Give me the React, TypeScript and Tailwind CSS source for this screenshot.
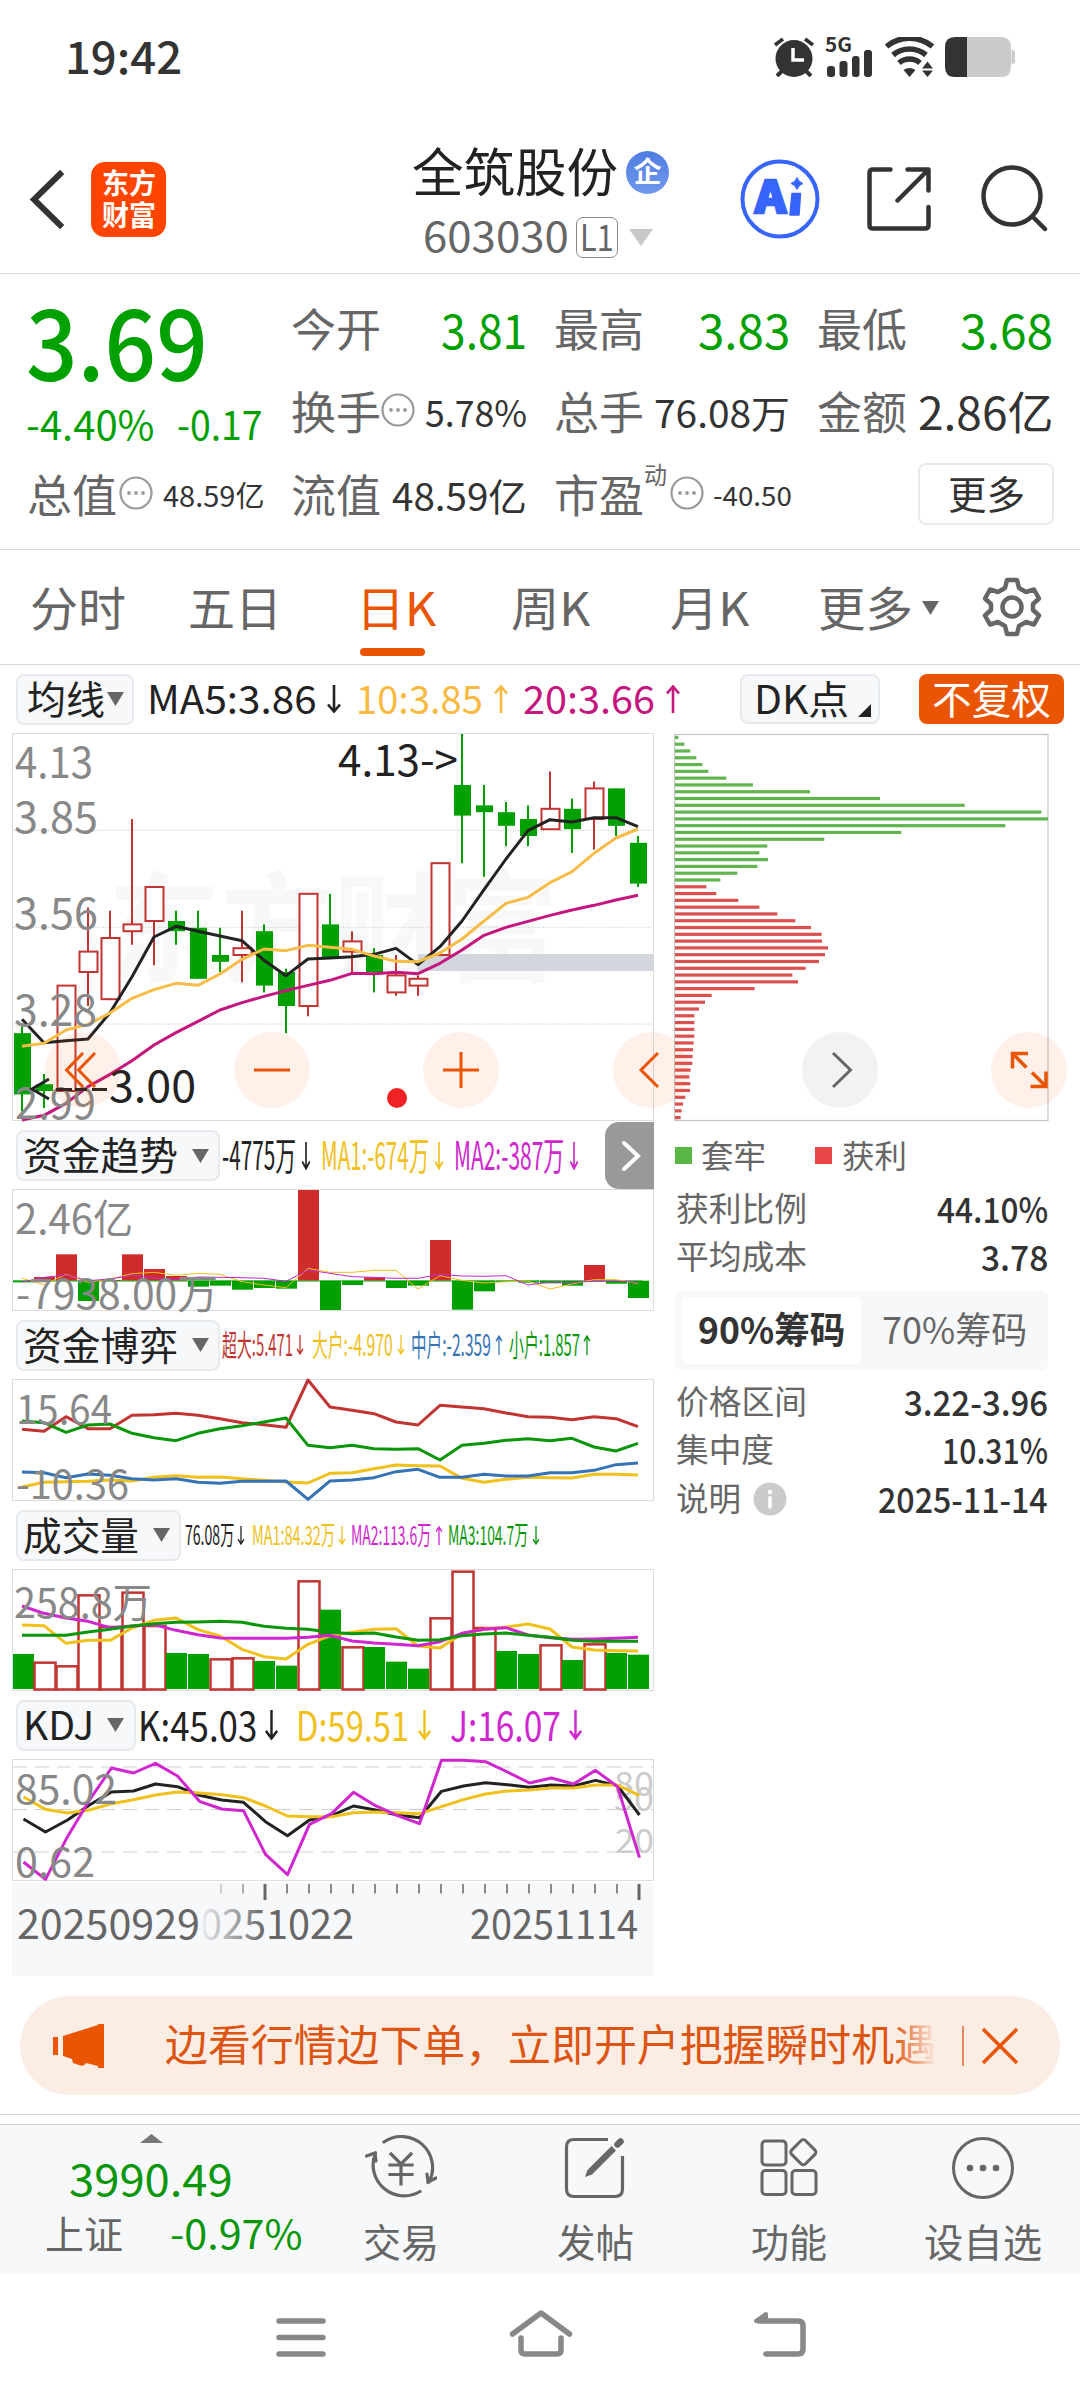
import { useLayoutEffect, useRef, useState } from 'react';
import type { ReactNode } from 'react';

const GREEN = '#00a000';
const RED = '#c23431';
const STEP = 22;
const X0 = 22;

// [open, close, high, low]
const CANDLES: [number, number, number, number][] = [
  [3.25, 3.07, 3.27, 3.02], [3.1, 3.08, 3.13, 3.03], [3.08, 3.39, 3.39, 3.08], [3.43, 3.49, 3.62, 3.33],
  [3.35, 3.53, 3.61, 3.35], [3.55, 3.57, 3.88, 3.51], [3.58, 3.68, 3.68, 3.45], [3.58, 3.55, 3.61, 3.51],
  [3.56, 3.41, 3.61, 3.41], [3.48, 3.46, 3.56, 3.43], [3.48, 3.5, 3.61, 3.4], [3.55, 3.39, 3.57, 3.37],
  [3.43, 3.33, 3.44, 3.25], [3.33, 3.66, 3.66, 3.3], [3.57, 3.47, 3.66, 3.47], [3.49, 3.52, 3.55, 3.43],
  [3.48, 3.43, 3.5, 3.37], [3.37, 3.42, 3.48, 3.36], [3.39, 3.41, 3.42, 3.36], [3.48, 3.75, 3.75, 3.48],
  [3.98, 3.89, 4.13, 3.75], [3.92, 3.9, 3.98, 3.71], [3.9, 3.86, 3.93, 3.8], [3.88, 3.83, 3.92, 3.8],
  [3.85, 3.91, 4.02, 3.85], [3.91, 3.85, 3.94, 3.78], [3.88, 3.97, 3.99, 3.79], [3.97, 3.86, 3.97, 3.83],
  [3.81, 3.69, 3.83, 3.68],
];

// line series, in thirds of a pixel from the base of each panel
const MA5 = [898, 968, 962, 957, 878, 770, 651, 619, 634, 648, 662, 721, 767, 717, 714, 710, 703, 685, 734, 680, 603, 509, 417, 332, 299, 306, 293, 293, 320];
const MA10 = [979, 970, 930, 913, 879, 835, 809, 790, 796, 762, 718, 687, 692, 676, 682, 688, 708, 724, 725, 699, 657, 603, 550, 532, 488, 455, 400, 354, 327];
const MA20 = [1200, 1186, 1150, 1100, 1063, 1022, 975, 938, 904, 870, 848, 829, 812, 796, 781, 760, 761, 757, 761, 730, 690, 646, 622, 604, 586, 570, 556, 540, 526];

const FLOW = [487, 471, 403, 543, 480, 403, 447, 468, 500, 497, 509, 504, 506, 210, 570, 495, 472, 504, 497, 360, 569, 514, 486, 488, 490, 497, 435, 491, 534];
const FLOW_MA1 = [475, 494, 463, 487, 477, 461, 457, 466, 460, 463, 485, 495, 503, 445, 457, 457, 451, 451, 507, 467, 481, 489, 485, 483, 507, 492, 479, 479, 490];
const FLOW_MA2 = [486, 472, 465, 482, 477, 466, 474, 478, 471, 472, 473, 475, 484, 450, 460, 470, 472, 475, 475, 463, 468, 469, 467, 495, 486, 487, 484, 483, 487];

const GAME_XL = [928, 934, 890, 926, 926, 886, 884, 880, 886, 896, 908, 914, 922, 780, 861, 871, 881, 906, 915, 856, 861, 866, 879, 890, 892, 899, 890, 896, 920];
const GAME_S = [903, 908, 937, 915, 912, 940, 953, 962, 940, 926, 917, 906, 894, 976, 983, 976, 986, 988, 986, 1020, 976, 970, 961, 956, 962, 955, 981, 993, 970];
const GAME_L = [1101, 1087, 1085, 1084, 1080, 1083, 1072, 1067, 1072, 1071, 1076, 1081, 1086, 1089, 1060, 1058, 1046, 1035, 1037, 1038, 1075, 1087, 1078, 1072, 1073, 1074, 1063, 1063, 1065];
const GAME_M = [1056, 1058, 1073, 1062, 1066, 1076, 1080, 1076, 1087, 1090, 1084, 1084, 1083, 1138, 1083, 1080, 1073, 1055, 1048, 1072, 1072, 1063, 1068, 1068, 1058, 1058, 1051, 1034, 1029];

const VOL = [462, 485, 496, 283, 378, 275, 375, 459, 462, 475, 472, 483, 497, 241, 329, 439, 441, 485, 506, 352, 212, 381, 453, 462, 433, 480, 430, 459, 464];
const VOL_UP = [1, 2, 3, 4, 5, 6, 9, 10, 13, 15, 19, 20, 21, 24, 26];
const VOL_MA1 = [375, 377, 430, 421, 421, 384, 361, 354, 389, 408, 448, 470, 477, 433, 407, 397, 388, 386, 438, 444, 401, 388, 381, 372, 387, 441, 450, 452, 453];
const VOL_MA2 = [318, 340, 354, 364, 383, 378, 374, 391, 404, 414, 415, 415, 415, 412, 406, 423, 429, 433, 437, 425, 400, 388, 383, 405, 413, 418, 417, 415, 412];
const VOL_MA3 = [406, 406, 406, 396, 388, 378, 371, 367, 366, 364, 367, 379, 385, 388, 397, 401, 399, 411, 421, 419, 407, 402, 399, 406, 412, 421, 424, 424, 424];

const KDJ_K = [957, 996, 960, 915, 876, 873, 852, 860, 886, 900, 907, 965, 1007, 960, 947, 918, 930, 945, 953, 874, 858, 848, 854, 862, 855, 858, 841, 857, 945];
const KDJ_D = [891, 928, 939, 930, 911, 899, 885, 876, 879, 884, 893, 918, 948, 950, 950, 938, 936, 938, 941, 920, 899, 882, 873, 870, 864, 864, 855, 855, 887];
const KDJ_J = [1086, 1138, 1010, 900, 804, 819, 790, 828, 904, 927, 932, 1063, 1124, 973, 941, 877, 917, 947, 971, 781, 781, 785, 816, 849, 834, 852, 811, 860, 1073];

const CHIPS_TRAPPED = [10, 28, 46, 64, 82, 100, 154, 234, 405, 615, 869, 1099, 1119, 991, 679, 448, 277, 253, 279, 247, 187, 136];
const CHIPS_PROFIT = [94, 124, 190, 253, 307, 361, 408, 440, 441, 459, 450, 432, 392, 352, 369, 239, 110, 90, 72, 58, 58, 58, 58, 56, 54, 53, 52, 47, 43, 46, 45, 31, 24, 20, 17];

const xAt = (i: number) => X0 + i * STEP;
const priceY = (p: number) => 734 + (4.13 - p) * 340;
const toPoints = (values: number[], base: number) => values.map((v, i) => `${xAt(i)},${base + v / 3}`).join(' ');

// Text squeezed or stretched to an exact width
function Fit({ w, className = '', children }: { w: number; className?: string; children: ReactNode }) {
  const ref = useRef<HTMLSpanElement>(null);
  const [scale, setScale] = useState(1);
  useLayoutEffect(() => {
    if (ref.current) setScale(w / ref.current.offsetWidth);
  }, [w]);
  return (
    <span className={`inline-block shrink-0 leading-none ${className}`} style={{ width: w }}>
      <span ref={ref} className="inline-block origin-left whitespace-nowrap" style={{ transform: `scaleX(${scale}) translateY(-6%)` }}>
        {children}
      </span>
    </span>
  );
}

function Label({ x, y, w, size = 44, fill = '#888', children }: { x: number; y: number; w: number; size?: number; fill?: string; children: string }) {
  return (
    <text x={x - 2} y={y} fontSize={size} fill={fill} textLength={w + 4} lengthAdjust="spacingAndGlyphs">{children}</text>
  );
}

function Line({ values, base, color, width = 3 }: { values: number[]; base: number; color: string; width?: number }) {
  return <polyline points={toPoints(values, base)} fill="none" stroke={color} strokeWidth={width} strokeLinejoin="round" />;
}

function Frame({ top, height }: { top: number; height: number }) {
  return <rect x={12.5} y={top + 0.5} width={641} height={height - 1} fill="none" stroke="#dcdcdc" />;
}

function Arrow({ up = false, w = 16, h = 28, className = '' }: { up?: boolean; w?: number; h?: number; className?: string }) {
  return (
    <svg className={`shrink-0 ${className}`} width={w} height={h} viewBox="0 0 16 28" preserveAspectRatio="none" fill="none" stroke="currentColor" strokeWidth="2.6">
      {up ? <path d="M8 28V2M2 8.500l6-7 6 7" /> : <path d="M8 0v26M2 19.500l6 7 6-7" />}
    </svg>
  );
}

function Tri({ className = '' }: { className?: string }) {
  return (
    <svg className={`shrink-0 ${className}`} width="17" height="14" viewBox="0 0 17 14"><path d="M0 0h17l-8.500 14z" fill="#666" /></svg>
  );
}

function Dots({ className = '' }: { className?: string }) {
  return (
    <svg className={`shrink-0 ${className}`} width="34" height="34" viewBox="0 0 34 34">
      <circle cx="17" cy="17" r="15.500" fill="none" stroke="#999" strokeWidth="2.200" />
      <circle cx="10" cy="17" r="1.900" fill="#999" /><circle cx="17" cy="17" r="1.900" fill="#999" /><circle cx="24" cy="17" r="1.900" fill="#999" />
    </svg>
  );
}

function StatusBar() {
  return (
    <div className="h-[110px] flex items-start justify-between pl-[65px] pr-[65px] pt-[37px]">
      <Fit w={117} className="-mt-[2px] text-[45px] font-medium text-[#333]">19:42</Fit>
      <div className="flex h-10 text-[#333]">
        <svg width="42" height="40" viewBox="0 0 42 40" fill="#333">
          <circle cx="21" cy="21.500" r="18.500" />
          <path d="M2 8l8-6M40 8l-8-6" stroke="#333" strokeWidth="3.500" />
          <path d="M4 39l6-6M38 39l-6-6" stroke="#333" strokeWidth="4" />
          <path d="M20 11v12h11" fill="none" stroke="#fff" strokeWidth="3.500" />
        </svg>
        <svg className="ml-[11px] overflow-visible" width="47" height="40" viewBox="0 0 47 40" fill="#333">
          <text x="-1" y="15" fontSize="20" fontWeight="700" textLength="27" lengthAdjust="spacingAndGlyphs">5G</text>
          <rect x="1" y="29" width="8" height="11" rx="3" /><rect x="13.500" y="24" width="8" height="16" rx="3" />
          <rect x="26" y="19" width="7.500" height="21" rx="3" /><rect x="38" y="13" width="8" height="27" rx="3" />
        </svg>
        <svg className="ml-3" width="49" height="40" viewBox="0 0 49 40" fill="none" stroke="#333" strokeWidth="5.500">
          <path d="M1.500 9.500a36 36 0 0 1 46 0" /><path d="M8 18a26 26 0 0 1 33 0" /><path d="M14 26a16 16 0 0 1 21 0" />
          <path d="M18.500 33q6-4 12 0l-6 7z" fill="#333" stroke="none" />
          <path d="M37 31.500l5.500-7 5.500 7zM37 33.500l5.500 6.500 5.500-6.500z" fill="#333" stroke="none" />
        </svg>
        <svg className="ml-[11px]" width="70" height="40" viewBox="0 0 70 40">
          <path d="M10 0h46q10 0 10 10v20q0 10-10 10H10z" fill="#cbcbcb" />
          <path d="M10 0h12v40H10Q0 40 0 30V10Q0 0 10 0z" fill="#333" />
          <path d="M66.500 13q3.500 0 3.500 3v8q0 3-3.500 3z" fill="#cbcbcb" />
        </svg>
      </div>
    </div>
  );
}

function Header() {
  return (
    <div className="h-[164px] flex border-b border-[#d9d9d9]">
      <div className="flex h-[75px] mt-[52px] ml-[29px]">
        <svg className="mt-[7px]" width="38" height="61" viewBox="0 0 38 61" fill="none" stroke="#333" strokeWidth="6" strokeLinecap="square">
          <path d="M31 5L5 30.500 31 56" />
        </svg>
        <div className="ml-[24px] size-[75px] rounded-[14px] bg-[#ff4400] text-white text-[28px] font-bold flex flex-col items-center justify-center gap-[4px]">
          <Fit w={54} className="h-[28px]">东方</Fit>
          <Fit w={54} className="h-[28px]">财富</Fit>
        </div>
      </div>
      <div className="ml-[246px] w-[262px] pt-[37px]">
        <div className="flex items-center">
          <Fit w={206} className="text-[52px] text-[#222]">全筑股份</Fit>
          <div className="ml-[8px] mb-[2px] size-[43px] rounded-full bg-linear-to-b from-[#4f7de0] to-[#6f98ee] flex items-center justify-center text-white">
            <Fit w={28} className="text-[28px] font-bold">企</Fit>
          </div>
        </div>
        <div className="flex items-center h-[42px] mt-[17px] ml-[11px] text-[#666]">
          <Fit w={146} className="text-[42px]">603030</Fit>
          <div className="ml-[7px] w-[42px] h-[41px] rounded-[7px] border-[1.5px] border-[#888] flex items-center justify-center">
            <Fit w={34} className="text-[37px]">L1</Fit>
          </div>
          <svg className="ml-[11px]" width="24" height="17" viewBox="0 0 24 17"><path d="M0 0h24L12 17z" fill="#c8c8c8" /></svg>
        </div>
      </div>
      <div className="flex items-start mt-[49px] ml-[66px]">
        <svg width="80" height="80" viewBox="0 0 80 80" fill="#3764fb">
          <circle cx="40" cy="40" r="37.500" fill="none" stroke="#3764fb" strokeWidth="4" />
          <text x="15" y="54" fontSize="44" fontWeight="900" textLength="31" lengthAdjust="spacingAndGlyphs" stroke="#3764fb" strokeWidth="2.500">A</text>
          <path d="M52 34.500h8.500l-1.500 21.500h-9z" stroke="#3764fb" strokeWidth="1.500" strokeLinejoin="round" />
          <path d="M57 18.500q1.500 4.500 6 6-4.500 1.500-6 6-1.500-4.500-6-6 4.500-1.500 6-6z" stroke="#3764fb" strokeWidth="1" />
        </svg>
        <svg className="ml-[47px] mt-[8px]" width="64" height="64" viewBox="0 0 64 64" fill="none" stroke="#333" strokeWidth="4.500" strokeLinecap="round" strokeLinejoin="round">
          <path d="M23.500 2.500H6Q2.500 2.500 2.500 6v52q0 3.500 3.500 3.500h52q3.500 0 3.500-3.500V40M40.500 2.500h21v21M61 3L30.500 33.500" />
        </svg>
        <svg className="ml-[50px] mt-[6px]" width="67" height="67" viewBox="0 0 67 67" fill="none" stroke="#333" strokeWidth="4.500" strokeLinecap="round">
          <circle cx="31" cy="31" r="28.500" /><path d="M52 52l12 12" />
        </svg>
      </div>
    </div>
  );
}

function Quote() {
  return (
    <div className="h-[276px] border-b border-[#d9d9d9] flex flex-col">
      <div className="flex mt-[15px] h-[166px]">
        <div className="ml-[26px] w-[265px] pt-[6px] text-[#00a000]">
          <Fit w={182} className="text-[98px] font-medium h-[98px]">3.69</Fit>
          <div className="flex mt-[12px]">
            <Fit w={128} className="text-[40px]">-4.40%</Fit>
            <Fit w={86} className="text-[40px] ml-[23px]">-0.17</Fit>
          </div>
        </div>
        <div className="flex gap-[28px]">
          {[
            { a: '今开', av: '3.81', aw: 86, b: '换手', bv: '5.78%', bw: 102, dots: true, size: 'text-[37px]' },
            { a: '最高', av: '3.83', aw: 92, b: '总手', bv: '76.08万', bw: 136, dots: false, size: 'text-[38px]' },
            { a: '最低', av: '3.68', aw: 93, b: '金额', bv: '2.86亿', bw: 135, dots: false, size: 'text-[45px]' },
          ].map((c) => (
            <div key={c.a} className="w-[236px] -mr-px">
              <div className="h-[83px] flex items-center justify-between">
                <Fit w={90} className="text-[45px] text-[#666]">{c.a}</Fit>
                <Fit w={c.aw} className="text-[48px] text-[#00a000]">{c.av}</Fit>
              </div>
              <div className="h-[83px] flex items-center justify-between">
                <div className="flex items-center">
                  <Fit w={90} className="text-[45px] text-[#666]">{c.b}</Fit>
                  {c.dots && <Dots className="mb-[8px]" />}
                </div>
                <Fit w={c.bw} className={`text-[#333] ${c.size}`}>{c.bv}</Fit>
              </div>
            </div>
          ))}
        </div>
      </div>
      <div className="h-[83px] flex items-center text-[#333]">
        <div className="ml-[27px] w-[264px] flex items-center">
          <Fit w={90} className="text-[45px] text-[#666]">总值</Fit>
          <Dots className="mb-[8px] ml-[2px]" />
          <Fit w={101} className="text-[29px] ml-[10px]">48.59亿</Fit>
        </div>
        <div className="w-[236px] flex items-center justify-between">
          <Fit w={90} className="text-[45px] text-[#666]">流值</Fit>
          <Fit w={135} className="text-[38px]">48.59亿</Fit>
        </div>
        <div className="ml-[27px] w-[264px] flex items-center">
          <Fit w={90} className="text-[45px] text-[#666]">市盈</Fit>
          <Fit w={23} className="text-[24px] text-[#666] mb-[44px]">动</Fit>
          <Dots className="mb-[8px] ml-[3px]" />
          <Fit w={79} className="text-[27px] ml-[9px]">-40.50</Fit>
        </div>
        <div className="ml-[100px] w-[136px] h-[62px] mb-[5px] rounded-[8px] border-2 border-[#e8ebee] flex items-center justify-center">
          <Fit w={77} className="text-[39px]">更多</Fit>
        </div>
      </div>
    </div>
  );
}

function Tabs() {
  return (
    <div className="h-[115px] border-b border-[#d9d9d9] flex text-[47px] text-[#666] pt-[35px]">
      <Fit w={96} className="ml-[30px]">分时</Fit>
      <Fit w={94} className="ml-[62px]">五日</Fit>
      <div className="ml-[74px] w-[80px] flex flex-col text-[#ea5504]">
        <Fit w={80} className="h-[47px]">日K</Fit>
        <div className="ml-[4px] mt-[16px] w-[65px] h-[8px] rounded-full bg-[#ea5504]" />
      </div>
      <Fit w={79} className="ml-[75px]">周K</Fit>
      <Fit w={79} className="ml-[80px]">月K</Fit>
      <Fit w={95} className="ml-[69px]">更多</Fit>
      <Tri className="ml-[9px] mt-[16px]" />
      <svg className="ml-[43px] -mt-[8px]" width="60" height="60" viewBox="0 0 60 60" fill="none" stroke="#666" strokeWidth="4.500" strokeLinejoin="round">
        <path d="M25 3h10l2 8 7 4 8-2.500 5 9-6 5.500v6l6 5.500-5 9-8-2.500-7 4-2 8H25l-2-8-7-4-8 2.500-5-9L9 33v-6l-6-5.500 5-9 8 2.500 7-4z" />
        <circle cx="30" cy="30" r="9.500" />
      </svg>
    </div>
  );
}

function MaRow() {
  return (
    <div className="h-[68px] flex items-center pl-4 text-[39px] text-[#222]">
      <div className="w-[118px] h-[51px] rounded-[8px] border-2 border-[#e6e9ed] bg-[#f7f8fa] flex items-center pl-[9px]">
        <Fit w={78}>均线</Fit>
        <Tri className="ml-[2px]" />
      </div>
      <Fit w={170} className="ml-[13px]">MA5:3.86</Fit>
      <Arrow className="ml-[9px]" />
      <div className="flex items-center ml-[14px] text-[#f8ba41]">
        <Fit w={127}>10:3.85</Fit>
        <Arrow up className="ml-[10px]" />
      </div>
      <div className="flex items-center ml-[14px] text-[#c5157f]">
        <Fit w={132}>20:3.66</Fit>
        <Arrow up className="ml-[10px]" />
      </div>
      <div className="ml-[59px] w-[140px] h-[50px] rounded-[8px] border-2 border-[#e6e9ed] bg-[#f7f8fa] flex items-center pl-[12px]">
        <Fit w={95}>DK点</Fit>
        <svg className="ml-[9px] mt-[22px]" width="13" height="13" viewBox="0 0 13 13"><path d="M13 0v13H0z" fill="#222" /></svg>
      </div>
      <div className="ml-[39px] w-[145px] h-[50px] rounded-[8px] bg-[#ea5504] text-white flex items-center justify-center">
        <Fit w={119}>不复权</Fit>
      </div>
    </div>
  );
}

function PriceChart() {
  return (
    <svg width="642" height="389" viewBox="12 733 642 389">
      <text x="108" y="972" fontSize="118" fontWeight="700" fill="#f8f8f8" textLength="450" lengthAdjust="spacingAndGlyphs">东方财富</text>
      <Frame top={733} height={388} />
      {[830.3, 927.3, 1024].map((y) => (
        <line key={y} x1="13" x2="653" y1={y} y2={y} stroke="#c8c8c8" strokeDasharray="1 1.500" />
      ))}
      <rect x="418" y="954" width="236" height="17" fill="#d3d6dc" />
      {CANDLES.map(([open, close, high, low], i) => {
        const up = close > open;
        const top = priceY(Math.max(open, close));
        const bottom = priceY(Math.min(open, close));
        const x = xAt(i);
        return up ? (
          <g key={i} stroke={RED} strokeWidth="2">
            <path d={`M${x} ${priceY(high)}V${top}M${x} ${bottom}V${priceY(low)}`} />
            <rect x={x - 8.500} y={top} width={18} height={bottom - top} fill="#fff" />
          </g>
        ) : (
          <g key={i} fill={GREEN}>
            <rect x={x - 1} y={priceY(high)} width={2} height={priceY(low) - priceY(high)} />
            <rect x={x - 8} y={top} width={17} height={bottom - top} />
          </g>
        );
      })}
      <Line values={MA5} base={720} color="#222" />
      <Line values={MA10} base={720} color="#f8bc48" />
      <Line values={MA20} base={720} color="#c5157f" />
      <Label x={17} y={777.500} w={74}>4.13</Label>
      <Label x={16} y={832.500} w={80}>3.85</Label>
      <Label x={16} y={929} w={80}>3.56</Label>
      <Label x={16} y={1026} w={79}>3.28</Label>
      <Label x={17} y={1119} w={77}>2.99</Label>
      <Label x={340} y={775.500} w={116} fill="#222">{'4.13->'}</Label>
      <Label x={111} y={1102} w={83} fill="#222">3.00</Label>
      <path d="M49 1079l-17 10 17 10M56 1089.500h16M75 1089.500h12M92 1089.500h15" fill="none" stroke="#222" strokeWidth="3" />
      <circle cx="397" cy="1098" r="10" fill="#f02223" />
    </svg>
  );
}

function Select({ w, text, textWidth, gap }: { w: string; text: string; textWidth: number; gap: string }) {
  return (
    <div className={`ml-1 h-[51px] shrink-0 rounded-[8px] border-2 border-[#e6e9ed] bg-[#f7f8fa] flex items-center pl-[5px] text-[39px] text-[#222] ${w}`}>
      <Fit w={textWidth}>{text}</Fit>
      <Tri className={gap} />
    </div>
  );
}

type Item = { text: string; w: number; color: string; up?: boolean; ml: string; gap: string };

function Values({ items, size, aw, ah }: { items: Item[]; size: string; aw: number; ah: number }) {
  return (
    <div className={`flex items-center ${size}`}>
      {items.map((it) => (
        <div key={it.text} className={`flex items-center ${it.color} ${it.ml}`}>
          <Fit w={it.w}>{it.text}</Fit>
          <Arrow up={it.up} w={aw} h={ah} className={it.gap} />
        </div>
      ))}
    </div>
  );
}

function FlowPanel() {
  return (
    <div>
      <div className="h-[67px] flex items-center">
        <Select w="w-[204px]" text="资金趋势" textWidth={155} gap="ml-[14px]" />
        <Values size="text-[39px]" aw={10} ah={28} items={[
          { text: '-4775万', w: 74, color: 'text-[#222]', ml: 'ml-[2px]', gap: 'ml-[5px]' },
          { text: 'MA1:-674万', w: 108, color: 'text-[#f0c01c]', ml: 'ml-[10px]', gap: 'ml-[5px]' },
          { text: 'MA2:-387万', w: 110, color: 'text-[#cf26cf]', ml: 'ml-[10px]', gap: 'ml-[5px]' },
        ]} />
        <div className="ml-auto w-[49px] h-[67px] rounded-l-[14px] bg-[#999] flex items-center justify-center">
          <svg className="ml-[3px]" width="20" height="30" viewBox="0 0 20 30" fill="none" stroke="#fff" strokeWidth="4" strokeLinecap="round"><path d="M3 2l14 13L3 28" /></svg>
        </div>
      </div>
      <svg width="642" height="122" viewBox="12 1189 642 122">
        <Frame top={1189} height={122} />
        {FLOW.map((v, i) => (
          <rect key={i} x={Math.max(xAt(i) - 10, 13)} y={1120 + Math.min(v, 482) / 3} width={21} height={Math.max(Math.abs(v - 482) / 3, 1)} fill={v < 482 ? '#cf2d2c' : GREEN} />
        ))}
        <path d="M13 1281h629" stroke={GREEN} strokeWidth="1" />
        <Line values={FLOW_MA1} base={1120} color="#f0c01c" width={1} />
        <Line values={FLOW_MA2} base={1120} color="#c02bd0" width={1} />
        <Label x={17} y={1234} w={114} size={41}>2.46亿</Label>
        <Label x={18} y={1309} w={198} size={41}>-7938.00万</Label>
      </svg>
    </div>
  );
}

function GamePanel() {
  return (
    <div>
      <div className="h-[68px] flex items-center">
        <Select w="w-[204px]" text="资金博弈" textWidth={155} gap="ml-[14px]" />
        <Values size="text-[30px]" aw={8} ah={20} items={[
          { text: '超大:5.471', w: 71, color: 'text-[#c23431]', ml: 'ml-[2px]', gap: 'ml-[3px]' },
          { text: '大户:-4.970', w: 81, color: 'text-[#f0c01c]', ml: 'ml-[8px]', gap: 'ml-[4px]' },
          { text: '中户:-2.359', w: 80, color: 'text-[#3573b5]', up: true, ml: 'ml-[6px]', gap: 'ml-[4px]' },
          { text: '小户:1.857', w: 71, color: 'text-[#0a960a]', up: true, ml: 'ml-[6px]', gap: 'ml-[3px]' },
        ]} />
      </div>
      <svg width="642" height="122" viewBox="12 1379 642 122">
        <Frame top={1379} height={122} />
        <Line values={GAME_XL} base={1120} color={RED} />
        <Line values={GAME_S} base={1120} color="#0a960a" />
        <Line values={GAME_L} base={1120} color="#f0c01c" />
        <Line values={GAME_M} base={1120} color="#3573b5" />
        <Label x={18} y={1424} w={92} size={41}>15.64</Label>
        <Label x={18} y={1499} w={109} size={41}>-10.36</Label>
      </svg>
    </div>
  );
}

function VolumePanel() {
  return (
    <div>
      <div className="h-[68px] flex items-center">
        <Select w="w-[165px]" text="成交量" textWidth={116} gap="ml-[14px]" />
        <Values size="text-[27px]" aw={8} ah={19} items={[
          { text: '76.08万', w: 49, color: 'text-[#222]', ml: 'ml-[4px]', gap: 'ml-[3px]' },
          { text: 'MA1:84.32万', w: 83, color: 'text-[#f0c01c]', ml: 'ml-[7px]', gap: 'ml-[3px]' },
          { text: 'MA2:113.6万', w: 80, color: 'text-[#cf26cf]', up: true, ml: 'ml-[5px]', gap: 'ml-[4px]' },
          { text: 'MA3:104.7万', w: 80, color: 'text-[#0a960a]', ml: 'ml-[5px]', gap: 'ml-[4px]' },
        ]} />
      </div>
      <svg width="642" height="122" viewBox="12 1569 642 122">
        <Frame top={1569} height={122} />
        {VOL.map((v, i) => {
          const top = 1500 + v / 3;
          return VOL_UP.includes(i)
            ? <rect key={i} x={xAt(i) - 9.500} y={top + 1} width={21} height={1688.500 - top} fill="#fff" stroke={RED} strokeWidth="2.500" />
            : <rect key={i} x={Math.max(xAt(i) - 10, 13)} y={top} width={21} height={1689 - top} fill={GREEN} />;
        })}
        <Line values={VOL_MA1} base={1500} color="#f0c01c" />
        <Line values={VOL_MA2} base={1500} color="#cf26cf" />
        <Line values={VOL_MA3} base={1500} color="#0a960a" />
        <Label x={16} y={1618} w={134} size={41}>258.8万</Label>
      </svg>
    </div>
  );
}

function KdjPanel() {
  return (
    <div>
      <div className="h-[68px] flex items-center">
        <Select w="w-[120px]" text="KDJ" textWidth={71} gap="ml-[13px]" />
        <Values size="text-[41px]" aw={15} ah={30} items={[
          { text: 'K:45.03', w: 119, color: 'text-[#222]', ml: 'ml-[2px]', gap: 'ml-[7px]' },
          { text: 'D:59.51', w: 113, color: 'text-[#f0c01c]', ml: 'ml-[17px]', gap: 'ml-[8px]' },
          { text: 'J:16.07', w: 111, color: 'text-[#cf26cf]', ml: 'ml-[18px]', gap: 'ml-[7px]' },
        ]} />
      </div>
      <svg width="642" height="124" viewBox="12 1759 642 124">
        <Frame top={1759} height={122} />
        {[1767, 1809.500, 1852].map((y) => (
          <line key={y} x1="13" x2="653" y1={y} y2={y} stroke="#cfcfcf" strokeDasharray="14 8" />
        ))}
        <Label x={616} y={1796} w={36} size={33} fill="#ccc">80</Label>
        <Label x={616} y={1811} w={36} size={33} fill="#ccc">50</Label>
        <Label x={617} y={1853} w={35} size={33} fill="#ccc">20</Label>
        <g transform="translate(1.500 0)">
          <Line values={KDJ_K} base={1500} color="#222" />
          <Line values={KDJ_D} base={1500} color="#f0c01c" />
          <Line values={KDJ_J} base={1500} color="#cf26cf" />
        </g>
        <Label x={17} y={1804} w={98} size={41}>85.02</Label>
        <Label x={17} y={1877} w={76} size={41}>0.62</Label>
      </svg>
      <svg className="bg-[#f7f8fa]" width="642" height="93" viewBox="12 1883 642 93">
        <defs>
          <linearGradient id="fade" x1="0" x2="1" y1="0" y2="0">
            <stop offset="0" stopColor="#f7f8fa" /><stop offset="0.050" stopColor="#f7f8fa" stopOpacity="0.850" /><stop offset="1" stopColor="#f7f8fa" stopOpacity="0" />
          </linearGradient>
        </defs>
        {Array.from({ length: 20 }, (_, k) => {
          const major = k === 2 || k === 19;
          return <path key={k} d={`M${221 + k * 22} 1884v${major ? 16 : 9.500}`} stroke="#666" strokeWidth={major ? 3 : 1.500} />;
        })}
        <Label x={180} y={1938.500} w={172} size={41} fill="#666">20251022</Label>
        <rect x="178" y="1883" width="24" height="93" fill="#f7f8fa" />
        <rect x="202" y="1883" width="64" height="93" fill="url(#fade)" />
        <Label x={19} y={1938.500} w={179} size={41} fill="#666">20250929</Label>
        <Label x={472} y={1938.500} w={164} size={41} fill="#666">20251114</Label>
      </svg>
    </div>
  );
}

function InfoRow({ label, value, lw, vw, info = false }: { label: string; value: string; lw: number; vw: number; info?: boolean }) {
  return (
    <div className="h-[48.500px] flex items-center justify-between pl-[1px] pr-[1px]">
      <div className="flex items-center">
        <Fit w={lw} className="text-[33px] text-[#666]">{label}</Fit>
        {info && (
          <svg className="ml-[12px]" width="34" height="34" viewBox="0 0 34 34">
            <circle cx="17" cy="17" r="16.500" fill="#cbcbcb" />
            <circle cx="17" cy="10" r="2.200" fill="#fff" /><rect x="15.200" y="14" width="3.600" height="12.500" rx="1.500" fill="#fff" />
          </svg>
        )}
      </div>
      <Fit w={vw} className="text-[35px] font-medium text-[#333]">{value}</Fit>
    </div>
  );
}

function ChipPanel() {
  return (
    <div className="w-[375px] ml-5">
      <svg className="block" width="375" height="389" viewBox="674 733 375 389">
        <rect x="674.500" y="734.500" width="373.500" height="386" fill="none" stroke="#c4c4c4" strokeWidth="1.200" />
        {[...CHIPS_TRAPPED, ...CHIPS_PROFIT].map((v, i) => (
          <rect key={i} x="675" y={735.800 + i * 6.790} width={v / 3} height="3.200" fill={i < CHIPS_TRAPPED.length ? '#62b54e' : '#d9504f'} />
        ))}
      </svg>
      <div className="flex items-center h-[67px] pl-[1px] text-[32px] text-[#666]">
        <div className="size-[17px] bg-[#5ab745]" />
        <Fit w={65} className="ml-[9px]">套牢</Fit>
        <div className="ml-[49px] size-[17px] bg-[#e84848]" />
        <Fit w={65} className="ml-[10px]">获利</Fit>
      </div>
      <div className="-mt-[4px] pl-[1px]">
        <InfoRow label="获利比例" value="44.10%" lw={131} vw={111} />
        <InfoRow label="平均成本" value="3.78" lw={131} vw={67} />
        <div className="mt-[9px] mb-[8px] w-[373px] h-[79px] rounded-[6px] bg-[#f7f8fa] p-[6px] flex items-center text-[37px]">
          <div className="w-[180px] h-[67px] shrink-0 rounded-[6px] bg-white flex items-center justify-center text-[#333] font-bold">
            <Fit w={147}>90%筹码</Fit>
          </div>
          <Fit w={145} className="ml-[21px] text-[#666]">70%筹码</Fit>
        </div>
        <InfoRow label="价格区间" value="3.22-3.96" lw={131} vw={144} />
        <InfoRow label="集中度" value="10.31%" lw={98} vw={106} />
        <InfoRow label="说明" value="2025-11-14" lw={65} vw={170} info />
      </div>
    </div>
  );
}

// Round controls floating over the charts
function ChartControls() {
  return (
    <svg className="absolute left-[45px] top-[298px]" width="1035" height="78" viewBox="45 1031 1035 78" fill="none" stroke="#ea5504" strokeWidth="3">
      {[83, 272, 461, 651, 1029].map((cx) => (
        <circle key={cx} cx={cx} cy="1070" r="38" fill="#ff5a00" fillOpacity="0.085" stroke="none" />
      ))}
      <circle cx="840" cy="1070" r="38" fill="#000" fillOpacity="0.050" stroke="none" />
      <path d="M83 1053l-16.500 17 16.500 17M95 1053l-16.500 17 16.500 17" />
      <path d="M254 1070h36M443 1070h36M461 1052v36" />
      <path d="M658 1053l-17 17 17 17" />
      <path d="M833 1053l17.500 17-17.500 17" stroke="#666" />
      <path d="M1028 1053.500h-15.500v15M1012.500 1053.500l14 14M1030.500 1086.500h15.500v-15M1046 1086.500l-14-14" strokeWidth="3.500" />
    </svg>
  );
}

function Notice() {
  return (
    <div className="mt-[20px] mx-[20px] h-[99px] rounded-full bg-[#fcede4] flex items-center text-[#dd5512]">
      <svg className="ml-[33px] shrink-0" width="52" height="44" viewBox="0 0 52 44" fill="#ea5504">
        <path d="M0 13h5v18H0zM10 12L45 1V0h6v44h-6v-2l-12-3q-2 4-7 2l-6-2-1-4-9-3z" />
      </svg>
      <div className="relative ml-[60px] w-[772px] flex">
        <Fit w={772} className="text-[43px]">边看行情边下单，立即开户把握瞬时机遇</Fit>
        <div className="absolute right-0 -top-2 w-[44px] h-16 bg-linear-to-r from-[#fcede4]/0 to-[#fcede4]" />
      </div>
      <div className="ml-[25px] w-[1.500px] h-[40px] bg-[#e58a5e]" />
      <svg className="ml-[17px]" width="38" height="38" viewBox="0 0 38 38" fill="none" stroke="#ea5504" strokeWidth="3.500"><path d="M2 2l34 34M36 2L2 36" /></svg>
    </div>
  );
}

function BottomBar() {
  return (
    <div className="mt-[19px] border-t border-[#d5d5d5] pt-[9px]">
      <div className="h-[150px] border-t border-[#d0d0d0] bg-[#f7f8fa] flex text-[39px] text-[#666]">
        <div className="w-[303px] flex flex-col">
          <svg className="ml-[140px] mt-[9px]" width="23" height="9" viewBox="0 0 23 9"><path d="M0 9L11.500 0 23 9z" fill="#777" /></svg>
          <Fit w={164} className="ml-[69px] mt-[15px] h-[44px] text-[44px] text-[#0a960a]">3990.49</Fit>
          <div className="flex items-center ml-[45px] mt-[12px]">
            <Fit w={78}>上证</Fit>
            <Fit w={132} className="ml-[47px] text-[40px] text-[#0a960a]">-0.97%</Fit>
          </div>
        </div>
        <div className="w-[195px] flex flex-col items-center">
          <svg className="mt-[10px]" width="72" height="66" viewBox="364 2135 72 66" fill="none" stroke="#666" strokeWidth="3.200" strokeLinecap="round">
            <path d="M383 2142A31 31 0 0 1 428 2182M435 2178l-8 4-1-8M374.500 2153A31 31 0 0 0 419 2191.500M365.500 2156l8.500-3 1 8" />
            <path d="M390 2154l10 10 10-10M389 2165h22M389 2174.500h22M400 2164v20" strokeLinecap="square" />
          </svg>
          <Fit w={76} className="mt-[22px]">交易</Fit>
        </div>
        <div className="w-[194px] flex flex-col items-center">
          <svg className="mt-[10px]" width="62" height="66" viewBox="564 2135 62 66" fill="none" stroke="#666" strokeWidth="3.200">
            <path d="M608 2139.500h-34q-7.500 0-7.500 7.500v42q0 7.500 7.500 7.500h41q7.500 0 7.500-7.500v-33" />
            <path d="M585 2177l2.500-7 24-24 4.500 4.500-24 24z" fill="#666" stroke="none" />
            <path d="M617.500 2144.500l3-3" strokeWidth="6.500" strokeLinecap="round" />
          </svg>
          <Fit w={77} className="mt-[22px]">发帖</Fit>
        </div>
        <div className="w-[194px] flex flex-col items-center">
          <svg className="mt-[10px]" width="62" height="66" viewBox="758 2135 62 66" fill="none" stroke="#666" strokeWidth="3">
            <rect x="762" y="2141" width="24" height="24" rx="3.500" /><rect x="762" y="2170.500" width="24" height="24" rx="3.500" />
            <rect x="792" y="2170.500" width="24" height="24" rx="3.500" />
            <rect x="793.500" y="2142.500" width="19.500" height="19.500" rx="3" transform="rotate(45 803.300 2152.300)" />
          </svg>
          <Fit w={76} className="mt-[22px]">功能</Fit>
        </div>
        <div className="w-[194px] flex flex-col items-center">
          <svg className="mt-[10px]" width="66" height="66" viewBox="0 0 66 66" fill="none" stroke="#666" strokeWidth="3">
            <circle cx="33" cy="33" r="29.500" />
            <circle cx="20" cy="33" r="3.300" fill="#666" stroke="none" /><circle cx="33" cy="33" r="3.300" fill="#666" stroke="none" /><circle cx="46" cy="33" r="3.300" fill="#666" stroke="none" />
          </svg>
          <Fit w={118} className="mt-[22px]">设自选</Fit>
        </div>
      </div>
      <div className="h-[125px] pt-[34px] flex">
        <svg className="ml-[275px]" width="52" height="52" viewBox="0 0 52 52" stroke="#888" strokeWidth="5.500" strokeLinecap="round">
          <path d="M4 13h44M4 29.500h44M4 46h44" />
        </svg>
        <svg className="ml-[181px]" width="66" height="52" viewBox="0 0 66 52" fill="none" stroke="#888" strokeWidth="5.500" strokeLinecap="round" strokeLinejoin="round">
          <path d="M4.500 26L33 5l28.500 21M13 30v12q0 4 4 4h32q4 0 4-4V30" />
        </svg>
        <svg className="ml-[178px]" width="56" height="52" viewBox="0 0 56 52" fill="none" stroke="#888" strokeWidth="5.500" strokeLinecap="round" strokeLinejoin="round">
          <path d="M14 46h32q5 0 5-5V18q0-5-5-5H7" /><path d="M14 6v7H4z" fill="#888" strokeWidth="4" />
        </svg>
      </div>
    </div>
  );
}

export default function App() {
  return (
    <div className="w-[1080px] h-[2400px] overflow-hidden bg-white font-['Noto_Sans_CJK_SC',sans-serif]">
      <StatusBar />
      <Header />
      <Quote />
      <Tabs />
      <MaRow />
      <div className="relative flex items-start pl-3 h-[1243px]">
        <div className="w-[642px] flex flex-col [&_svg]:block [&_svg]:overflow-visible">
          <PriceChart />
          <FlowPanel />
          <GamePanel />
          <VolumePanel />
          <KdjPanel />
        </div>
        <ChipPanel />
        <ChartControls />
      </div>
      <Notice />
      <BottomBar />
    </div>
  );
}
